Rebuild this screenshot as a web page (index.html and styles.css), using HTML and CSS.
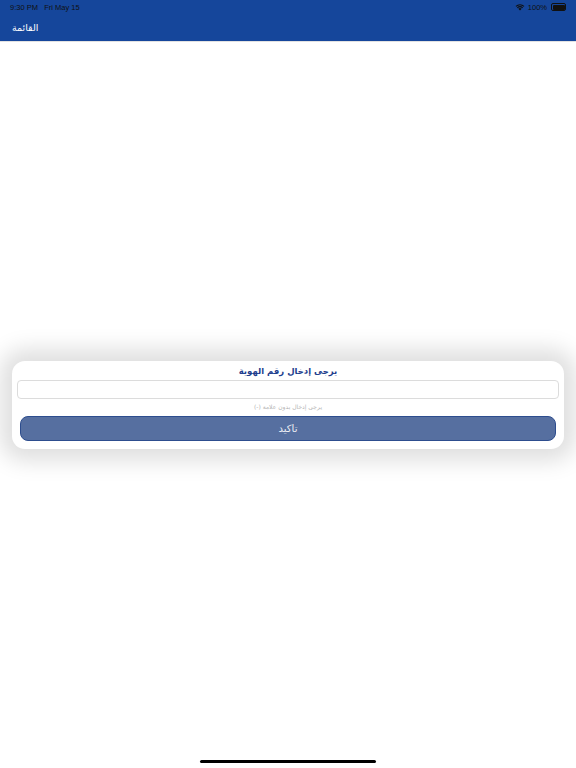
FILE: index.html
```html
<!DOCTYPE html>
<html lang="ar">
<head>
    <meta charset="UTF-8">
    <meta name="viewport" content="width=device-width, initial-scale=1.0">
    <title>القائمة</title>
    <link rel="stylesheet" href="styles.css">
</head>
<body>

    <div id="topbar">
        <div class="status">
            <span class="time">9:30 PM&nbsp;&nbsp;&nbsp;Fri May 15</span>
            <span class="status-right">
                <svg class="wifi" width="10" height="8" viewBox="0 0 20 15">
                    <path d="M10 14.5 L6.6 11 A5 5 0 0 1 13.4 11 Z" fill="#111"/>
                    <path d="M3.9 8.3 A9 9 0 0 1 16.1 8.3 L14.6 9.8 A7 7 0 0 0 5.4 9.8 Z" fill="#111"/>
                    <path d="M1.2 5.5 A13 13 0 0 1 18.8 5.5 L17.3 7 A11 11 0 0 0 2.7 7 Z" fill="#111"/>
                </svg>
                <span>100%</span>
                <span class="battery"><span class="battery-fill"></span></span>
            </span>
        </div>
        <div class="nav">
            <span class="nav-title">القائمة</span>
        </div>
    </div>

    <div id="content">
        <div class="card" dir="rtl">
            <div class="card-title">يرجى إدخال رقم الهوية</div>
            <input type="text" id="id-input" class="id-input">
            <div class="hint">يرجى إدخال بدون علامة (-)</div>
            <button class="confirm">تاكيد</button>
        </div>
    </div>

    <div class="home-indicator"></div>

</body>
</html>
```

FILE: styles.css
```css
body {
    margin: 0;
    width: 576px;
    height: 768px;
    overflow: hidden;
    background-color: white;
    font-family: "DejaVu Sans", sans-serif;
    position: relative;
}

#topbar {
    background-color: #15469b;
    height: 41px;
    border-bottom: 1px solid #e2e2e2;
}

.status {
    display: flex;
    justify-content: space-between;
    align-items: center;
    height: 14px;
    padding: 0 10px;
    font-family: "Liberation Sans", Arial, sans-serif;
    font-size: 7.5px;
    color: #111;
}

.status-right {
    display: flex;
    align-items: center;
    gap: 3px;
}

.battery {
    display: inline-block;
    width: 12px;
    height: 5px;
    border: 1px solid #111;
    border-radius: 2px;
    padding: 0.5px;
    margin-left: 1px;
}

.battery-fill {
    display: block;
    width: 100%;
    height: 100%;
    background-color: #111;
    border-radius: 1px;
}

.nav {
    height: 27px;
    display: flex;
    align-items: center;
    padding: 0 12px;
}

.nav-title {
    color: white;
    font-size: 9.5px;
}

#content {
    height: 726px;
    display: flex;
    align-items: center;
}

.card {
    flex: 1;
    margin: 0 12px;
    padding: 4px 5px 8px;
    background-color: white;
    border-radius: 13px;
    box-shadow: 0 0 22px 12px rgba(0, 0, 0, 0.13);
    display: flex;
    flex-direction: column;
}

.card-title {
    text-align: center;
    color: #1f3f8e;
    font-size: 8.5px;
    font-weight: bold;
    height: 15px;
    line-height: 13px;
}

.id-input {
    height: 19px;
    box-sizing: border-box;
    border: 1px solid #dcdcdc;
    border-radius: 4px;
    margin: 0;
    padding: 0 6px;
}

.hint {
    text-align: center;
    color: #b5b5b5;
    font-size: 6px;
    height: 17px;
    line-height: 15px;
}

.confirm {
    margin: 0 3px;
    height: 25px;
    background-color: #566fa0;
    border: 1px solid #2d4d8e;
    border-radius: 8px;
    color: #eef0f5;
    font-family: "DejaVu Sans", sans-serif;
    font-size: 10px;
}

.home-indicator {
    position: absolute;
    left: 200px;
    bottom: 5px;
    width: 176px;
    height: 3px;
    border-radius: 2px;
    background-color: black;
}
```
